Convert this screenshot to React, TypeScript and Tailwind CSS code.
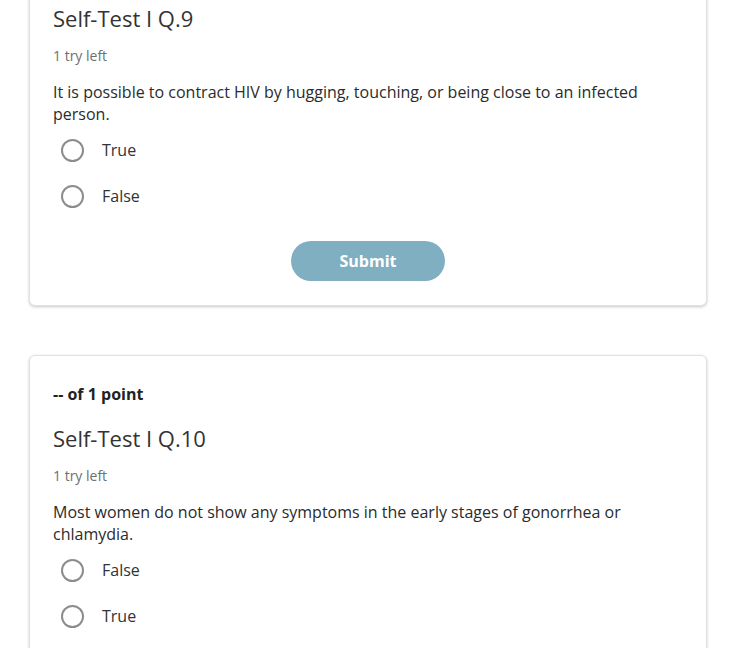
import React from "react";

type Question = {
  id: number;
  title: string;
  text: string;
  options: string[];
};

const questions: Question[] = [
  {
    id: 9,
    title: "Self-Test I Q.9",
    text: "It is possible to contract HIV by hugging, touching, or being close to an infected person.",
    options: ["True", "False"],
  },
  {
    id: 10,
    title: "Self-Test I Q.10",
    text: "Most women do not show any symptoms in the early stages of gonorrhea or chlamydia.",
    options: ["False", "True"],
  },
];

function QuestionCard({ q }: { q: Question }) {
  return (
    <div className="rounded-[6px] border border-[#e2e2e2] bg-white px-[23px] pt-[27px] pb-[24px] shadow-[0_1px_3px_rgba(0,0,0,0.22)]">
      <div className="h-[22px] text-[16px] leading-[22px] font-bold text-[#222]">-- of 1 point</div>
      <h2 className="mt-[17px] h-[32px] text-[22px] leading-[32px] font-normal text-[#333]">{q.title}</h2>
      <div className="mt-[12px] text-[14px] leading-[20px] text-[#6f6f6f]">1 try left</div>
      <p className="mt-[15px] text-[16px] leading-[22px] text-[#2b2b2b]">{q.text}</p>
      <div className="mt-[2px] flex flex-col">
        {q.options.map((opt) => (
          <label key={opt} className="flex h-[46px] items-center">
            <span className="ml-[8px] h-[23px] w-[23px] rounded-full border-2 border-[#8c8c8c]" />
            <span className="ml-[18px] text-[16px] leading-[22px] text-[#333]">{opt}</span>
          </label>
        ))}
      </div>
      <div className="mt-[22px] flex justify-center">
        <button className="h-[40px] w-[154px] rounded-full bg-[#80afc2] text-[16px] font-bold text-white">
          Submit
        </button>
      </div>
    </div>
  );
}

export default function App() {
  return (
    <div className="min-h-screen overflow-hidden bg-white font-['Open_Sans',sans-serif]">
      <div className="mx-[29px] -mt-[65px] flex w-[678px] flex-col gap-[49px]">
        {questions.map((q) => (
          <QuestionCard key={q.id} q={q} />
        ))}
      </div>
    </div>
  );
}
